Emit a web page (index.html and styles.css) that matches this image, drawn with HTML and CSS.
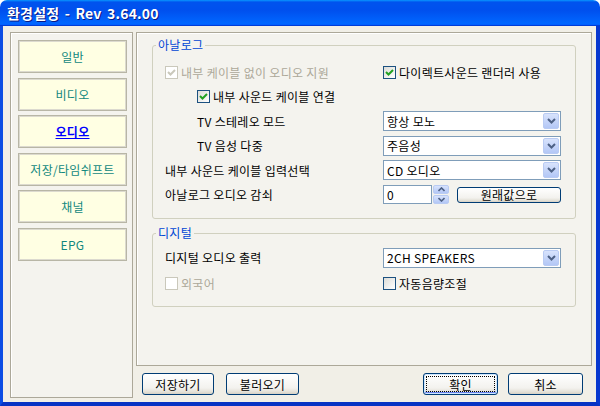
FILE: index.html
```html
<!DOCTYPE html>
<html>
<head>
<meta charset="UTF-8">
<title>환경설정</title>
<link rel="stylesheet" href="styles.css">
</head>
<body>
<div class="window">
	<div class="titlebar">환경설정 - Rev 3.64.00</div>
	<div class="client">
		<!-- 왼쪽 메뉴 -->
		<div class="nav">
			<a class="nav-btn">일반</a>
			<a class="nav-btn">비디오</a>
			<a class="nav-btn active">오디오</a>
			<a class="nav-btn">저장/타임쉬프트</a>
			<a class="nav-btn">채널</a>
			<a class="nav-btn">EPG</a>
		</div>
		<div class="main">
			<div class="panel">
				<fieldset class="group analog">
					<legend>아날로그</legend>
					<div class="row">
						<label class="check disabled"><span class="box"><svg width="11" height="11" viewBox="0 0 11 11"><path d="M2 5l2.5 2.5L9 3" fill="none" stroke="#cac8bb" stroke-width="2"/></svg></span>내부 케이블 없이 오디오 지원</label>
						<label class="check"><span class="box"><svg width="11" height="11" viewBox="0 0 11 11"><path d="M2 5l2.5 2.5L9 3" fill="none" stroke="#21a121" stroke-width="2"/></svg></span>다이렉트사운드 랜더러 사용</label>
					</div>
					<div class="row">
						<label class="check indent"><span class="box"><svg width="11" height="11" viewBox="0 0 11 11"><path d="M2 5l2.5 2.5L9 3" fill="none" stroke="#21a121" stroke-width="2"/></svg></span>내부 사운드 케이블 연결</label>
						<span></span>
					</div>
					<div class="row">
						<span class="indent">TV 스테레오 모드</span>
						<div class="combo"><span class="value">항상 모노</span><span class="drop"><svg width="9" height="6" viewBox="0 0 9 6"><path d="M1 1l3.5 3.5L8 1" fill="none" stroke="#4d6185" stroke-width="2"/></svg></span></div>
					</div>
					<div class="row">
						<span class="indent">TV 음성 다중</span>
						<div class="combo"><span class="value">주음성</span><span class="drop"><svg width="9" height="6" viewBox="0 0 9 6"><path d="M1 1l3.5 3.5L8 1" fill="none" stroke="#4d6185" stroke-width="2"/></svg></span></div>
					</div>
					<div class="row">
						<span>내부 사운드 케이블 입력선택</span>
						<div class="combo"><span class="value">CD 오디오</span><span class="drop"><svg width="9" height="6" viewBox="0 0 9 6"><path d="M1 1l3.5 3.5L8 1" fill="none" stroke="#4d6185" stroke-width="2"/></svg></span></div>
					</div>
					<div class="row">
						<span>아날로그 오디오 감쇠</span>
						<div class="spin-row">
							<span class="spin-field">0</span>
							<span class="spin-btns">
								<span class="spin-btn"><svg width="7" height="5" viewBox="0 0 7 5"><path d="M0.5 4l3-3 3 3" fill="none" stroke="#4d6185" stroke-width="1.6"/></svg></span>
								<span class="spin-btn"><svg width="7" height="5" viewBox="0 0 7 5"><path d="M0.5 1l3 3 3-3" fill="none" stroke="#4d6185" stroke-width="1.6"/></svg></span>
							</span>
							<span class="btn small">원래값으로</span>
						</div>
					</div>
				</fieldset>
				<fieldset class="group digital">
					<legend>디지털</legend>
					<div class="row">
						<span>디지털 오디오 출력</span>
						<div class="combo"><span class="value">2CH SPEAKERS</span><span class="drop"><svg width="9" height="6" viewBox="0 0 9 6"><path d="M1 1l3.5 3.5L8 1" fill="none" stroke="#4d6185" stroke-width="2"/></svg></span></div>
					</div>
					<div class="row tall">
						<label class="check disabled"><span class="box"></span>외국어</label>
						<label class="check"><span class="box"></span>자동음량조절</label>
					</div>
				</fieldset>
			</div>
			<div class="btn-row">
				<span class="btn save">저장하기</span>
				<span class="btn load">불러오기</span>
				<span class="btn ok default">확인</span>
				<span class="btn cancel">취소</span>
			</div>
		</div>
	</div>
</div>
</body>
</html>
```

FILE: styles.css
```css
* {
	box-sizing: border-box;
}

html, body {
	margin: 0;
}

body {
	width: 600px;
	height: 406px;
	overflow: hidden;
	background: #fff;
	font-family: "Noto Sans CJK KR", "Liberation Sans", sans-serif;
	font-size: 12px;
	letter-spacing: 0.3px;
	color: #000;
}

.window {
	width: 600px;
	height: 406px;
	display: flex;
	flex-direction: column;
}

.titlebar {
	height: 26px;
	padding-left: 7px;
	display: flex;
	align-items: center;
	border-radius: 7px 7px 0 0;
	background: linear-gradient(180deg, #0997ff, #0053ee 8%, #0050ee 40%, #0066ff 88%, #0066ff 93%, #005bff 95%, #003dd7 96%, #003dd7);
	color: #fff;
	font-weight: bold;
	font-size: 14px;
	letter-spacing: 0.2px;
	word-spacing: 2px;
	text-shadow: 1px 1px #0a1883;
}

.client {
	flex: 1;
	display: flex;
	gap: 3px;
	padding: 6px 4px 4px 7px;
	background: #f1efe7;
	border-left: 3px solid #0b4de4;
	border-right: 4px solid #0838cf;
	border-bottom: 4px solid #0733c4;
}

/* 왼쪽 메뉴 */
.nav {
	width: 123px;
	padding: 7px 5px 0 7px;
	display: flex;
	flex-direction: column;
	gap: 4.6px;
	border: 1px solid #aca899;
	box-shadow: inset 1px 1px 0 #fff;
	background: #f4f3ee;
}

.nav-btn {
	height: 33px;
	display: flex;
	align-items: center;
	justify-content: center;
	background: #ffffe3;
	border: 1px solid #b8b6a6;
	box-shadow: inset 0 0 0 1px #dcdacf;
	color: #11887e;
	cursor: pointer;
}

.nav-btn.active {
	color: #0000ff;
	font-weight: bold;
	text-decoration: underline;
}

.main {
	flex: 1;
	display: flex;
	flex-direction: column;
}

.panel {
	height: 334px;
	padding: 4px 15px 0 15px;
	border: 1px solid #aca899;
	box-shadow: inset 1px 1px 0 #fff;
	background: #f4f3ee;
}

.group {
	margin: 0;
	min-width: 0;
	border: 1px solid #d0d0bf;
	border-radius: 3px;
	padding: 7px 14px 11px 12px;
}

.group legend {
	margin-left: -9px;
	padding: 0 2px;
	line-height: 16px;
	color: #0046d5;
}

.group.digital {
	margin-top: 6px;
	padding-top: 4px;
	padding-bottom: 10px;
}

.row {
	height: 24.5px;
	display: grid;
	grid-template-columns: 218px 1fr;
	align-items: center;
	white-space: nowrap;
}

.digital .row {
	height: 25px;
}

.digital .row.tall {
	height: 26px;
}

.indent {
	padding-left: 32px;
}

.check {
	display: flex;
	align-items: center;
	gap: 3px;
}

.check .box {
	width: 13px;
	height: 13px;
	display: flex;
	align-items: center;
	justify-content: center;
	border: 1px solid #1c5180;
	background: linear-gradient(135deg, #dcdcd7, #fff);
}

.check.disabled {
	color: #aca899;
}

.check.disabled .box {
	border-color: #cac8bb;
	background: #fff;
}

/* 콤보박스 */
.combo {
	height: 20px;
	display: flex;
	align-items: stretch;
	border: 1px solid #7f9db9;
	background: #fff;
}

.combo .value {
	flex: 1;
	padding-left: 3px;
	display: flex;
	align-items: center;
}

.combo .drop {
	width: 16px;
	margin: 1px;
	display: flex;
	align-items: center;
	justify-content: center;
	border: 1px solid #b9cbf3;
	border-radius: 2px;
	background: linear-gradient(180deg, #d8e3fc, #b3c7f6);
}

.spin-row {
	display: flex;
	align-items: center;
}

.spin-field {
	width: 49px;
	height: 19px;
	padding-left: 3px;
	display: flex;
	align-items: center;
	border: 1px solid #7f9db9;
	background: #fff;
}

.spin-btns {
	width: 16px;
	height: 19px;
	margin-left: 1px;
	display: flex;
	flex-direction: column;
	gap: 1px;
}

.spin-btn {
	flex: 1;
	display: flex;
	align-items: center;
	justify-content: center;
	border: 1px solid #b9cbf3;
	border-radius: 2px;
	background: linear-gradient(180deg, #d8e3fc, #b3c7f6);
}

/* 버튼 */
.btn {
	height: 22px;
	display: flex;
	align-items: center;
	justify-content: center;
	border: 1px solid #003c74;
	border-radius: 3px;
	background: linear-gradient(180deg, #fff, #f3f2ee 70%, #e3e0d6 90%, #d6d0c5);
	cursor: pointer;
}

.btn.small {
	width: 104px;
	height: 16px;
	margin-left: auto;
}

.btn-row {
	margin-top: 7px;
	padding: 0 9px 0 6px;
	display: flex;
}

.btn.save {
	width: 72px;
}

.btn.load {
	width: 73px;
	margin-left: 12px;
}

.btn.ok {
	width: 75px;
	margin-left: auto;
}

.btn.cancel {
	width: 75px;
	margin-left: 10px;
}

.btn.default {
	box-shadow: inset 0 0 0 1px #cee7ff, inset 0 -1px 0 1px #6982ee;
	outline: 1px dotted #000;
	outline-offset: -4px;
}
```
